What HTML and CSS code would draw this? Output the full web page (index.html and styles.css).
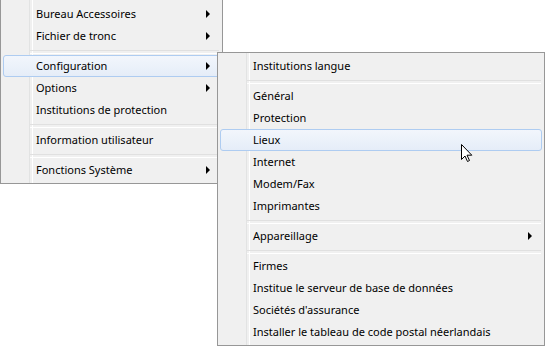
FILE: index.html
```html
<!DOCTYPE html>
<html lang="fr">
<head>
  <meta charset="UTF-8" />
  <title>Menu</title>
  <link rel="stylesheet" href="styles.css">
</head>
<body>

  <div class="menu main-menu">
    <div class="item has-sub">Bureau Accessoires</div>
    <div class="item has-sub">Fichier de tronc</div>
    <div class="sep"></div>
    <div class="item has-sub active">Configuration</div>
    <div class="item has-sub">Options</div>
    <div class="item">Institutions de protection</div>
    <div class="sep"></div>
    <div class="item">Information utilisateur</div>
    <div class="sep"></div>
    <div class="item has-sub">Fonctions Système</div>
  </div>

  <div class="menu sub-menu">
    <div class="item">Institutions langue</div>
    <div class="sep"></div>
    <div class="item">Général</div>
    <div class="item">Protection</div>
    <div class="item active">Lieux</div>
    <div class="item">Internet</div>
    <div class="item">Modem/Fax</div>
    <div class="item">Imprimantes</div>
    <div class="sep"></div>
    <div class="item has-sub">Appareillage</div>
    <div class="sep"></div>
    <div class="item">Firmes</div>
    <div class="item">Institue le serveur de base de données</div>
    <div class="item">Sociétés d'assurance</div>
    <div class="item">Installer le tableau de code postal néerlandais</div>
  </div>

  <svg class="cursor" width="12" height="19" viewBox="0 0 12 19">
    <path d="M0.5 0.5 L0.5 15.5 L4 12 L6.5 17.5 L8.5 16.5 L6 11.2 L10.8 11.2 Z" fill="#fff" stroke="#000" stroke-width="1" stroke-linejoin="miter"/>
  </svg>

</body>
</html>
```

FILE: styles.css
```css
* {
  margin: 0;
  padding: 0;
  box-sizing: border-box;
}

body {
  position: relative;
  width: 545px;
  height: 346px;
  overflow: hidden;
  background: #ffffff;
  font-family: 'Noto Sans', 'Open Sans', sans-serif;
  font-size: 11px;
  color: #000;
}

.menu {
  position: absolute;
  display: flex;
  flex-direction: column;
  background: #f0f0f0;
  border: 1px solid #979797;
  padding: 2px;
}

/* vertical gutter line next to the icon column */
.menu::before {
  content: "";
  position: absolute;
  top: 0;
  bottom: 0;
  left: 28px;
  width: 2px;
  border-left: 1px solid #e2e3e3;
  border-right: 1px solid #ffffff;
}

.main-menu {
  left: 0;
  top: -1px;
  width: 223px;
  height: 185px;
  padding-top: 3px;
}

.sub-menu {
  left: 217px;
  top: 52px;
  width: 328px;
  height: 294px;
}

.item {
  position: relative;
  height: 22px;
  line-height: 20px;
  padding-left: 32px;
  white-space: nowrap;
  border: 1px solid transparent;
  border-radius: 3px;
}

.item.active {
  border-color: #aeccf1;
  background: linear-gradient(#f2f6fc, #e5edf8);
}

.has-sub::after {
  content: "";
  position: absolute;
  right: 9px;
  top: 6px;
  border-left: 4px solid #000;
  border-top: 4px solid transparent;
  border-bottom: 4px solid transparent;
}

.sep {
  position: relative;
  height: 8px;
  margin-left: 27px;
  margin-right: 1px;
}

.sep::before {
  content: "";
  position: absolute;
  left: 0;
  right: 0;
  top: 3px;
  height: 2px;
  border-top: 1px solid #e0e0e0;
  border-bottom: 1px solid #ffffff;
}

.cursor {
  position: absolute;
  left: 461px;
  top: 144px;
}
```
